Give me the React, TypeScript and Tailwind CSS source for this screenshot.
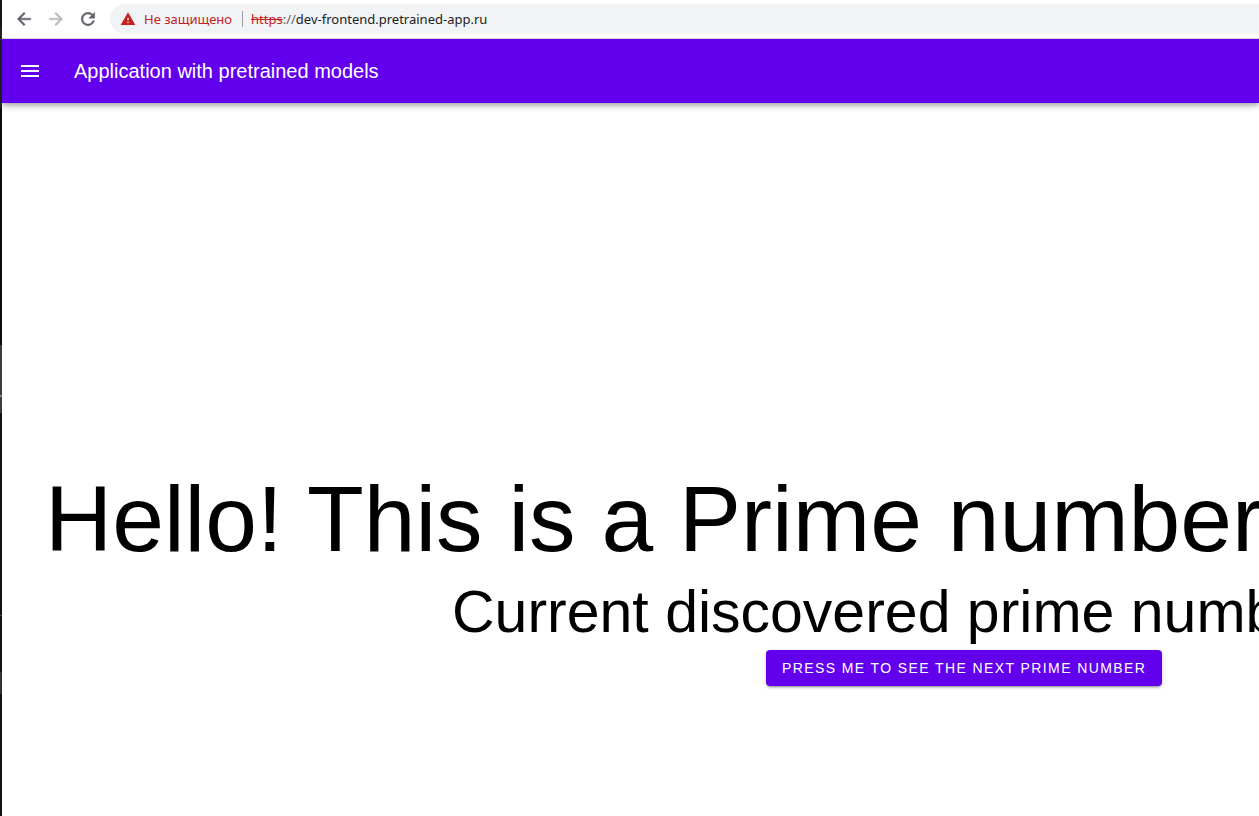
import React from "react";
import { MdMenu, MdWarning } from "react-icons/md";

function NavIcon({ path }: { path: string }) {
  return (
    <svg viewBox="0 0 24 24" className="size-5" fill="currentColor" stroke="currentColor" strokeWidth="0.6" aria-hidden="true">
      <path d={path} />
    </svg>
  );
}

const BACK = "M20 11H7.83l5.59-5.59L12 4l-8 8 8 8 1.41-1.41L7.83 13H20v-2z";
const FORWARD = "M12 4l-1.41 1.41L16.17 11H4v2h12.17l-5.58 5.59L12 20l8-8z";
const RELOAD =
  "M17.65 6.35A7.958 7.958 0 0 0 12 4c-4.42 0-7.99 3.58-7.99 8s3.57 8 7.99 8c3.73 0 6.84-2.55 7.73-6h-2.08A5.99 5.99 0 0 1 12 18c-3.31 0-6-2.69-6-6s2.69-6 6-6c1.66 0 3.14.69 4.22 1.78L13 11h7V4l-2.35 2.35z";

function BrowserBar() {
  return (
    <div className="relative z-10 flex h-[39px] items-center border-b border-[#d5d7da] bg-white pl-[10px]">
      <nav aria-label="Browser navigation" className="flex items-center gap-2 text-[#5f6368]">
        <button type="button" aria-label="Back" className="grid size-6 place-items-center">
          <NavIcon path={BACK} />
        </button>
        <button type="button" aria-label="Forward" disabled className="grid size-6 place-items-center text-[#bababa]">
          <NavIcon path={FORWARD} />
        </button>
        <button type="button" aria-label="Reload" className="grid size-6 place-items-center">
          <NavIcon path={RELOAD} />
        </button>
      </nav>
      <div className="ml-[10px] flex h-[30px] flex-1 items-center overflow-hidden rounded-l-full bg-[#f1f3f4] pl-[10px] font-['Noto_Sans',sans-serif] text-[13px] leading-5 whitespace-nowrap">
        <MdWarning size={16} className="text-[#c5221f]" />
        <span className="ml-2 text-[#c5221f]">Не защищено</span>
        <span className="mr-2 ml-[10px] h-4 w-px bg-[#9aa0a6]" />
        <a href="#" className="text-[#202124]">
          <span className="text-[#c5221f] line-through">https</span>
          <span className="text-[#5f6368]">://</span>
          dev-frontend.pretrained-app.ru
        </a>
      </div>
    </div>
  );
}

function AppBar() {
  return (
    <header className="relative flex h-16 items-center bg-[#6200ee] pl-4 text-white shadow-[0_2px_4px_-1px_rgba(0,0,0,0.2),0_4px_5px_0_rgba(0,0,0,0.14),0_1px_10px_0_rgba(0,0,0,0.12)]">
      <button type="button" aria-label="Menu" className="grid size-6 place-items-center">
        <MdMenu size={24} />
      </button>
      <span className="pl-8 text-xl">Application with pretrained models</span>
    </header>
  );
}

function WindowEdge() {
  return (
    <div aria-hidden="true" className="flex w-[2px] shrink-0 flex-col bg-[#111113]">
      <div className="h-7 bg-[#151515]" />
      <div className="h-20 bg-[#232323]" />
      <div className="h-[237px] bg-[#0c0c0d]" />
      <div className="h-[50px] bg-[#3c3c3e]" />
      <div className="h-[2px] bg-[#858585]" />
      <div className="h-4 bg-[#3c3c3e]" />
      <div className="h-[202px]" />
      <div className="h-px bg-[#4a4a4a]" />
      <div className="h-14" />
      <div className="h-[22px] bg-[#30303a]" />
    </div>
  );
}

export default function App() {
  return (
    <div className="flex min-h-screen overflow-hidden bg-white font-['Liberation_Sans',sans-serif] text-black">
      <WindowEdge />
      <div className="min-w-0 flex-1">
        <BrowserBar />
        <AppBar />
        <main className="flex flex-col items-start overflow-hidden pt-[368px] whitespace-nowrap">
          <h1 className="pl-[43px] text-[93px] leading-[96px]">Hello! This is a Prime number</h1>
          <h2 className="mt-[15px] pl-[450px] text-[59px] leading-[60px]">Current discovered prime number</h2>
          <div className="mt-2 pb-8 pl-[764px]">
            <button
              type="button"
              className="h-9 rounded bg-[#6200ee] px-4 text-sm tracking-widest text-white uppercase shadow-[0_3px_1px_-2px_rgba(0,0,0,0.2),0_2px_2px_0_rgba(0,0,0,0.14),0_1px_5px_0_rgba(0,0,0,0.12)]"
            >
              Press me to see the next prime number
            </button>
          </div>
        </main>
      </div>
    </div>
  );
}
